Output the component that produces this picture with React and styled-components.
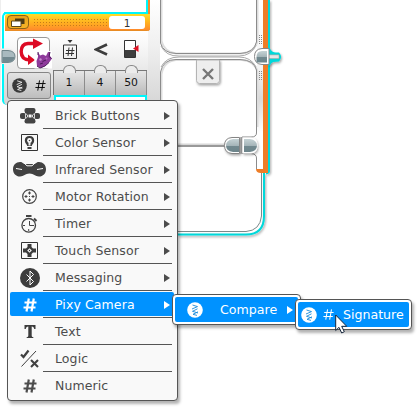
import React from "react";
import styled, { createGlobalStyle, css } from "styled-components";

const GlobalStyle = createGlobalStyle`
  * { box-sizing: border-box; }
  body { margin: 0; background: #fff; overflow: hidden; font-family: "DejaVu Sans", sans-serif; }
`;

const Canvas = styled.main`
  position: relative;
  width: 420px;
  height: 409px;
  overflow: hidden;
  background: #fff;
`;

const Wires = styled.svg`
  position: absolute;
  inset: 0;
`;

const Block = styled.section`
  position: absolute;
  left: 2px;
  top: 12px;
  width: 146px;
  height: 93px;
  padding-left: 2px;
  border: solid #00f6fa;
  border-width: 2px 0 0 2px;
  border-radius: 5px 0 0 5px;
  background: linear-gradient(#fff 18px, #fafafa 28px, #d5d5d5 88px);
`;

const BlockHeader = styled.header`
  display: flex;
  align-items: center;
  width: 145px;
  height: 17px;
  margin-left: -1px;
  padding: 0 5px 0 2px;
  border-radius: 3px 0 3px 0;
  border-bottom: 1px solid #e98c25;
  background: linear-gradient(#ffdc26, #ffb020 55%, #ff8a2c);
`;

const HeaderButton = styled.div`
  display: grid;
  place-items: center;
  width: 22px;
  height: 14px;
  border: 1px solid #8d6216;
  border-radius: 4px;
  background: linear-gradient(#e7a21d, #f6b326);
`;

const Grip = styled.div`
  width: 75px;
  height: 9px;
  margin: 0 2px 0 4px;
  background: radial-gradient(circle, #c77b18 0.5px, transparent 0.9px) 0 0 / 3px 3px;
`;

const PortName = styled.div`
  width: 36px;
  height: 13px;
  border-radius: 3px;
  background: #fff;
  color: #333;
  font-size: 10.5px;
  line-height: 14px;
  text-align: center;
`;

const BlockBody = styled.div`
  display: grid;
  grid-template-columns: 43px 93px;
  grid-template-rows: 32px 28px;
  row-gap: 3px;
  column-gap: 4px;
  padding: 6px 0 0 1px;
`;

const Symbol = styled.div`
  display: flex;
  justify-self: end;
  width: 33px;
  height: 32px;
  border: 1px solid #999;
  border-radius: 4px;
  background: #fff;
`;

const Inputs = styled.div`
  display: grid;
  grid-template-columns: repeat(3, 31px);
  place-items: center;
  padding-bottom: 8px;
`;

const ModeButton = styled.div`
  display: flex;
  align-items: center;
  justify-content: center;
  gap: 8px;
  height: 27px;
  margin: 0 -1px 0 0;
  border: 1px solid #858585;
  border-radius: 3px;
  background: linear-gradient(#e3e3e3, #bdbdbd);
`;

const Values = styled.div`
  display: grid;
  grid-template-columns: repeat(3, 31px);
  height: 25px;
  margin: -2px 0 0 -1px;
  border: 1px solid #777;
  border-width: 1px 0 0 1px;
  background: linear-gradient(#e6e6e6, #bababa);
`;

const Value = styled.div`
  position: relative;
  border-right: 1px solid #8c8c8c;
  color: #151515;
  font-size: 10.8px;
  line-height: 24px;
  text-align: center;
  &::before {
    content: "";
    position: absolute;
    left: 9px;
    top: -6px;
    width: 11px;
    height: 7px;
    border: 1px solid #8a8a8a;
    border-bottom: 0;
    border-radius: 6px 6px 0 0;
    background: #ececec;
  }
`;

const Menu = styled.ul`
  position: absolute;
  list-style: none;
  margin: 0;
  border: 1px solid #555;
  border-radius: 4px;
  background: #f9f9f9;
  box-shadow: 2px 3px 3px rgba(0, 0, 0, 0.3);
`;

const MainMenu = styled(Menu)`
  left: 7px;
  top: 100px;
  width: 171px;
  height: 301px;
  padding: 1px 4px 0 2px;
`;

const SubMenu = styled(Menu)`
  left: ${(p) => p.$x}px;
  top: ${(p) => p.$y}px;
  width: ${(p) => p.$w}px;
  height: 31px;
  padding: 2px;
  background: #fff;
`;

const Item = styled.li`
  position: relative;
  display: grid;
  grid-template-columns: 40px 1fr 12px;
  align-items: center;
  height: 27px;
  padding: 0 1px 0 0;
  color: #4c4c4c;
  font-size: 12.5px;
  letter-spacing: 0.1px;
  line-height: 20px;
  &:not(:last-child)::after {
    content: "";
    position: absolute;
    left: 33px;
    right: 1px;
    bottom: 0;
    height: 1px;
    background: #555;
  }
  ${(p) =>
    p.$active &&
    css`
      color: #fff;
      &::before {
        content: "";
        position: absolute;
        inset: 1px -1px 2px 0;
        border-radius: 2px;
        background: #0092ff;
      }
    `}
`;

const IconCell = styled.span`
  position: relative;
  display: grid;
  place-items: center;
  width: 39px;
  height: 27px;
`;

const Label = styled.span`
  position: relative;
  padding-left: 5px;
  white-space: nowrap;
`;

const Arrow = styled.i`
  position: relative;
  justify-self: end;
  margin-right: 2px;
  border: solid transparent;
  border-width: 4px 0 4px 6px;
  border-left-color: currentColor;
`;

const SubItem = styled.li`
  display: flex;
  align-items: center;
  height: 25px;
  padding: 0 3px 0 ${(p) => p.$inset}px;
  border-radius: 2px;
  background: #0092ff;
  color: #fff;
  font-size: 12.6px;
  line-height: 20px;
`;

const SubLabel = styled.span`
  margin-left: ${(p) => p.$gap}px;
  flex: 1;
  white-space: nowrap;
`;

const ModeMark = styled.span`
  display: flex;
  margin: 0 9px 0 6px;
`;

const Pointer = styled.svg`
  position: absolute;
  left: 335px;
  top: 314px;
`;

const HashIcon = ({ w = 2.2, size = 14 }) => (
  <svg width={size} height={size} viewBox="0 0 14 14" fill="none" stroke="currentColor" strokeWidth={w}>
    <path d="M5.8 0.5L3.5 13.5M10.8 0.5L8.5 13.5M1.5 4.5H13.5M.5 9.5H12.5" />
  </svg>
);

const CompareIcon = ({ fill = "#fff", stroke = "#1689da", size = 16 }) => (
  <svg width={size} height={size} viewBox="0 0 16 16">
    <circle cx="8" cy="8" r="7.8" fill={fill} />
    <path d="M5.5 3L10.5 4.6 5 7M10.5 6.8L5.5 9.3 11 11M11 9.8L6 12.3 10 13.4" fill="none" stroke={stroke} strokeWidth=".9" />
  </svg>
);

const icons = {
  brick: (
    <svg width="20" height="16" viewBox="0 0 20 16" fill="#454545">
      <rect x="4.5" y="0" width="11" height="5" rx="2" />
      <rect x="4.5" y="11" width="11" height="4.5" rx="2" />
      <rect x="0" y="5" width="6" height="6" rx="2" />
      <rect x="14" y="5" width="6" height="6" rx="2" />
      <path d="M5 3H15V13H5z" />
      <path d="M5.5 5.5L7.5 7V9L5.5 10.5V5.5M14.5 5.5L12.5 7V9L14.5 10.5V5.5" fill="none" stroke="#f9f9f9" strokeWidth=".8" />
      <rect x="8.6" y="6.5" width="3" height="3" fill="#f9f9f9" />
    </svg>
  ),
  color: (
    <svg width="17" height="17" viewBox="0 0 17 17">
      <path d="M.5.5H16.5V16.5H.5z" fill="none" stroke="#333" />
      <path d="M8.5 2C5.4 2 3.7 4 3.8 6.7 4 9.5 6 10 6.2 12H10.8C11 10 13 9.5 13.2 6.7 13.3 4 11.6 2 8.5 2zM6.5 13H10.5V15H6.5z" fill="#3b3b3b" />
      <circle cx="8.5" cy="6.5" r="2.4" fill="#fff" />
      <path d="M7.5 8H9.5V11.5H7.5z" fill="#eee" />
      <circle cx="8.5" cy="6.5" r=".8" fill="#444" />
    </svg>
  ),
  infrared: (
    <svg width="33" height="15" viewBox="0 0 33 15">
      <path d="M7 0C10 0 10 2 12 2H21C23 2 23 0 26 0C30 0 33 3 33 7.2S30 14.5 26 14.5C22 14.5 21 11.5 16.5 11.5S11 14.5 7 14.5C3 14.5 0 11.5 0 7.2S3 0 7 0z" fill="#424242" />
      <path d="M3 6.5L9 7.5M30 6.5L24 7.5M11 1L14 3.8H19L22 1" fill="none" stroke="#fff" />
    </svg>
  ),
  motor: (
    <svg width="15" height="15" viewBox="0 0 15 15" fill="none" stroke="#444">
      <circle cx="7.5" cy="7.5" r="6.8" strokeWidth="1.2" />
      <path d="M7.5 2.5V5.5M6 4H9M7.5 9.5V12.5M6 11H9M2.5 7.5H5.5M4 6V9M9.5 7.5H12.5M11 6V9" />
      <path d="M7 7.5H8" />
    </svg>
  ),
  timer: (
    <svg width="17" height="18" viewBox="0 0 17 18" fill="none" stroke="#444">
      <circle cx="7.7" cy="10.3" r="6.8" strokeWidth="1.3" />
      <path d="M5 1H10.5M13 3.5L15.5 6" strokeWidth="2" />
      <path d="M8.5 6V10.5H13M7.7 14V16M2 10.5H4" strokeWidth="1" />
    </svg>
  ),
  touch: (
    <svg width="17" height="17" viewBox="0 0 17 17">
      <path d="M.5.5H16.5V16.5H.5z" fill="none" stroke="#333" />
      <path d="M6.5 2H10.5V5L12 6.5H15V10.5H12L10.5 12V15H6.5V12L5 10.5H2V6.5H5L6.5 5z" fill="#3b3b3b" />
      <path d="M8.5 6.2L10.8 8.5 8.5 10.8 6.2 8.5z" fill="#fff" />
      <circle cx="8.5" cy="8.5" r=".7" fill="#333" />
    </svg>
  ),
  messaging: (
    <svg width="20" height="20" viewBox="0 0 20 20">
      <circle cx="10" cy="10" r="10" fill="#3d3d3d" />
      <path d="M6.5 6.5L13.5 13.5 10 17V3L13.5 6.5 6.5 13.5" fill="none" stroke="#fff" />
    </svg>
  ),
  hash: <HashIcon />,
  text: (
    <svg width="12" height="13" viewBox="0 0 12 13" fill="#3d3d3d">
      <path d="M.5 0H11.5V4H10.2C10 2.2 9.3 1.4 7.7 1.4V10.5C7.7 11.6 8.2 12 9.3 12V13H2.7V12C3.8 12 4.3 11.6 4.3 10.5V1.4C2.7 1.4 2 2.2 1.8 4H.5z" />
    </svg>
  ),
  logic: (
    <svg width="19" height="19" viewBox="0 0 19 19" fill="none" stroke="#404040">
      <path d="M1 5.5L3.5 8 8.5 1.5" strokeWidth="2.2" />
      <path d="M16 2L1.5 17.5" strokeWidth="1" />
      <path d="M11 11L18 18M18 11L11 18" strokeWidth="2.1" />
    </svg>
  ),
};

const entries = [
  { icon: "brick", label: "Brick Buttons", more: true },
  { icon: "color", label: "Color Sensor", more: true },
  { icon: "infrared", label: "Infrared Sensor", more: true },
  { icon: "motor", label: "Motor Rotation", more: true },
  { icon: "timer", label: "Timer", more: true },
  { icon: "touch", label: "Touch Sensor", more: true },
  { icon: "messaging", label: "Messaging", more: true },
  { icon: "hash", label: "Pixy Camera", more: true, active: true },
  { icon: "text", label: "Text" },
  { icon: "logic", label: "Logic" },
  { icon: "hash", label: "Numeric" },
];

const WireLayer = () => (
  <Wires width="420" height="409" viewBox="0 0 420 409" fill="none">
    <defs>
      <linearGradient id="panel" x1="0" y1="0" x2="0" y2="1">
        <stop offset="0" stopColor="#fff" />
        <stop offset=".45" stopColor="#f0f0f0" />
        <stop offset="1" stopColor="#d8d8d8" />
      </linearGradient>
      <linearGradient id="rail" x1="0" y1="0" x2="0" y2="1">
        <stop offset="0" stopColor="#fff" />
        <stop offset=".4" stopColor="#f4f4f4" />
        <stop offset=".58" stopColor="#d9d9d9" />
        <stop offset=".78" stopColor="#fff" />
      </linearGradient>
      <linearGradient id="plug" x1="0" y1="0" x2="0" y2="1">
        <stop offset="0" stopColor="#c5d2d5" />
        <stop offset=".55" stopColor="#a2b2b6" />
        <stop offset=".56" stopColor="#72898f" />
        <stop offset="1" stopColor="#6d858b" />
      </linearGradient>
      <filter id="soft" filterUnits="userSpaceOnUse" x="0" y="0" width="420" height="409">
        <feDropShadow dx="1" dy="1.5" stdDeviation="1" floodOpacity=".35" />
      </filter>
    </defs>
    <path d="M.5 0V100" stroke="#eee" />
    <path d="M150 0H160V100H146V30z" fill="url(#panel)" />
    <path d="M147 0V13H4" stroke="#00f6fa" strokeWidth="2" />
    <path d="M148 0H150V28Q150 31 147 31V14H148z" fill="#f58a2d" />
    <path d="M257 0H263V170H257z" fill="url(#rail)" />
    <path d="M161.5 0V41Q164 52 176 53.5H242Q255 52 257.5 41V0M161.5 100V74Q164 61 176 60H242Q255 61 257.5 72V127" stroke="#ddd" strokeWidth="2" />
    <path d="M160.5 0V43Q163 53 176 53.5H240Q254 53 256.5 42V0M160.5 100V72Q163 59.5 176 59.5H240Q254 60 256.5 70V133Q256.5 137 251 137H242V153.5H251Q256.5 154 256.5 158V169" stroke="#8b8b8b" />
    <path d="M161 46Q166 56.5 179 56H239Q251 56 256 45M161 67Q166 57 179 57H239Q251 57 256 67" stroke="#aaa" />
    <g fill="#888">
      {[0, 1, 2, 3, 4].flatMap((r) =>
        [259, 261].flatMap((x) =>
          [35, 71].map((y) => <rect key={`${r}-${x}-${y}`} x={x} y={y + r * 2} width="1" height="1" />)
        )
      )}
    </g>
    <g filter="url(#soft)">
      <path d="M269 0V171Q269 173 266 173.5" stroke="#00d8da" strokeWidth="2" />
    </g>
    <path d="M263 0H268V173H261Q256 173 256 169H263z" fill="#ee7d27" />
    <g filter="url(#soft)">
      <path d="M269 49Q271 53.5 276 53.5H278.5Q281.5 57 278.5 60.5L273 61Q270 62 269 65z" stroke="#00d8da" strokeWidth="2" fill="#00d8da" />
      <path d="M264 173V216Q264 234.5 246 234.5H178" stroke="#00d8da" strokeWidth="2" />
    </g>
    <path d="M261.5 173V216Q260 230.5 246 231.5H178" stroke="#7b898a" />
    <path d="M268 54.8H279V58.6H268z" fill="#e6e6e6" stroke="#999" strokeWidth=".5" />
    <path d="M269 48.5H262Q254.5 49 254.5 56.5T262 64.5H269z" fill="#fff" stroke="#888" />
    <path d="M267 51H262Q256.5 51 256.5 57V62.5H267z" fill="url(#plug)" />
    <path d="M178 144.5H225" stroke="#d8d8d8" strokeWidth="2" />
    <path d="M178 146H225" stroke="#999" strokeWidth="2" />
    <g filter="url(#soft)">
      <path d="M239.5 137.5H232Q224.5 138 224.5 145.5T232 153.5H239.5z" fill="#fff" stroke="#858585" />
      <path d="M242.5 137.5H251Q257.5 138 257.5 145.5T251 153.5H242.5z" fill="#fff" />
    </g>
    <path d="M239 139H233Q226 140 226 145.5T233 152H239z" fill="url(#plug)" />
    <path d="M244 139H250Q257 140 257 145.5T250 152H244z" fill="url(#plug)" />
    <path d="M241 137V154" stroke="#777" />
    <g filter="url(#soft)">
      <path d="M196.5 60H219.5V80.5Q219.5 83.5 216.5 83.5H199.5Q196.5 83.5 196.5 80.5z" fill="#eee" stroke="#b4b4b4" />
    </g>
    <path d="M203 69L213 79M213 69L203 79" stroke="#777" strokeWidth="2.4" />
  </Wires>
);

const ConnectorIn = styled.svg`
  position: absolute;
  left: 0;
  top: 48px;
`;

const Cutout = styled.div`
  position: absolute;
  left: 54px;
  top: 95px;
  width: 93px;
  height: 8px;
  border: 2px solid #00f6fa;
  border-bottom: 0;
  background: #fff;
`;

export default function App() {
  return (
    <>
      <GlobalStyle />
      <Canvas>
        <WireLayer />
        <Block>
          <BlockHeader>
            <HeaderButton>
              <svg width="14" height="9" viewBox="0 0 14 9">
                <path d="M4 .5H13.5V6H4z" fill="#4b3a16" />
                <path d="M.5 3H10V8.5H.5z" fill="#fff" stroke="#5c461c" />
              </svg>
            </HeaderButton>
            <Grip />
            <PortName>1</PortName>
          </BlockHeader>
          <BlockBody>
            <Symbol>
              <svg width="36" height="33" viewBox="0 0 36 33" overflow="visible">
                <path d="M17 5.5H10Q3.2 6 3.2 13.5Q3.2 22 12 22" fill="none" stroke="#dd0b25" strokeWidth="3.4" />
                <path d="M15 .5L25 5.5 15 11zM10 16.5L17 22 10 27z" fill="#dd0b25" />
                <path d="M16.500 13H34V30.500H16.500z" fill="#fff" />
                <path d="M20 14L22 17.500 25 16.500 28 18 30 14 32 14 32 18 34 20.500 31.500 24 27 28 23 30 19 28 18.500 23 20 19z" fill="#8e3a9b" />
                <path d="M32 14L31 18.500 33.500 20.500M19 28L22 30 27 28 31 24.500M20 14V17M24.500 23.500L28 22M22 26L25 25" fill="none" stroke="#4c1b5c" />
                <circle cx="22.500" cy="21.500" r="1.200" fill="#c48dcd" />
                <circle cx="28.500" cy="20.500" r="1" fill="#b26abc" />
              </svg>
            </Symbol>
            <Inputs>
              <svg width="14" height="19" viewBox="0 0 14 19" fill="none" stroke="#333">
                <path d="M4.5 0H9.5L7 3z" fill="#333" stroke="none" />
                <path d="M.5 5H13.5V18.5H.5z" />
                <path d="M6 7.5L5 16M9.5 7.5L8.5 16M3 10.5H11.5M2.5 13.5H11" strokeWidth="1" />
              </svg>
              <svg width="14" height="13" viewBox="0 0 14 13" fill="none" stroke="#3d3d3d" strokeWidth="2.7">
                <path d="M13 1.5L2 6.5 13 11.5" />
              </svg>
              <svg width="15" height="18" viewBox="0 0 15 18">
                <path d="M.5.5H11.5V17.5H.5z" fill="#fff" stroke="#333" />
                <path d="M1 10H11V17H1z" fill="#3e3e3e" />
                <path d="M9 8.5L14.5 5V12z" fill="#df1224" />
              </svg>
            </Inputs>
            <ModeButton>
              <CompareIcon fill="#3b3b3b" stroke="#fff" size={15} />
              <HashIcon w={1.2} size={11} />
            </ModeButton>
            <Values>
              <Value>1</Value>
              <Value>4</Value>
              <Value>50</Value>
            </Values>
          </BlockBody>
        </Block>
        <Cutout />
        <ConnectorIn width="17" height="18" viewBox="0 0 17 18">
          <path d="M0 .5H8Q16.5 1 16.5 9T8 16H0z" fill="#eee" />
          <path d="M2 2.5H8Q15 3 15 8.5T8 14.5H2z" fill="#a9babf" stroke="#71868b" />
          <path d="M2.5 9H14.5Q14 14 8 14H2.5z" fill="#728990" />
        </ConnectorIn>
        <MainMenu>
          {entries.map((e) => (
            <Item key={e.label} $active={e.active}>
              <IconCell>{icons[e.icon]}</IconCell>
              <Label>{e.label}</Label>
              {e.more && <Arrow />}
            </Item>
          ))}
        </MainMenu>
        <SubMenu $x={172} $y={294} $w={129}>
          <SubItem $inset={12}>
            <CompareIcon />
            <SubLabel $gap={17}>Compare</SubLabel>
            <Arrow />
          </SubItem>
        </SubMenu>
        <SubMenu $x={295} $y={299} $w={117}>
          <SubItem $inset={3}>
            <CompareIcon />
            <ModeMark>
              <HashIcon w={1.3} size={11} />
            </ModeMark>
            <SubLabel $gap={0}>Signature</SubLabel>
          </SubItem>
        </SubMenu>
        <Pointer width="13" height="20" viewBox="0 0 13 20">
          <path d="M.7 1V16.5L4 13.3 6.7 19 9.3 17.7 6.7 12.3H11.7z" fill="#fff" stroke="#15253a" />
        </Pointer>
      </Canvas>
    </>
  );
}
